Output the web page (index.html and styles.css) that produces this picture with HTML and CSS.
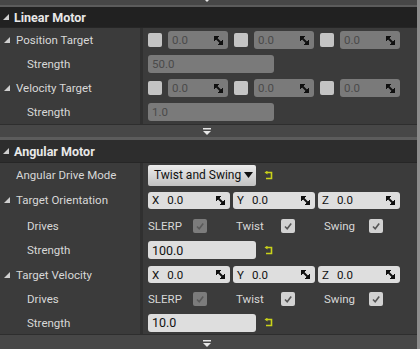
FILE: index.html
```html
<!DOCTYPE html>
<html lang="en">
<head>
  <meta charset="UTF-8" />
  <title>Details - Motor</title>
  <link rel="stylesheet" href="styles.css">
</head>
<body>
  <div class="panel">
    <div class="content">

      <!-- хвост предыдущей категории -->
      <div class="expander expander-top">
        <svg class="more" width="10" height="7" viewBox="0 0 10 7"><rect x="1" y="0" width="8" height="1.5" fill="#e6e6e6"/><polygon points="1,3 9,3 5,7" fill="#e6e6e6"/></svg>
      </div>
      <div class="cat-sep"></div>

      <!-- Linear Motor -->
      <div class="cat-header cat-dark">
        <svg class="tri" width="6" height="6" viewBox="0 0 6 6"><polygon points="0,6 6,6 6,0"/></svg>
        <span>Linear Motor</span>
      </div>

      <div class="row">
        <div class="name"><svg class="tri" width="6" height="6" viewBox="0 0 6 6"><polygon points="0,6 6,6 6,0"/></svg>Position Target</div>
        <div class="value">
          <div class="vec vec-off">
            <div class="pair"><span class="cb cb-off"></span><span class="field field-off">0.0<svg class="spin" width="9" height="9" viewBox="0 0 9 9"><polygon points="0,0 5,0 0,5"/><polygon points="9,9 4,9 9,4"/><line x1="1" y1="1" x2="8" y2="8" stroke-width="2"/></svg></span></div>
            <div class="pair"><span class="cb cb-off"></span><span class="field field-off">0.0<svg class="spin" width="9" height="9" viewBox="0 0 9 9"><polygon points="0,0 5,0 0,5"/><polygon points="9,9 4,9 9,4"/><line x1="1" y1="1" x2="8" y2="8" stroke-width="2"/></svg></span></div>
            <div class="pair"><span class="cb cb-off"></span><span class="field field-off">0.0<svg class="spin" width="9" height="9" viewBox="0 0 9 9"><polygon points="0,0 5,0 0,5"/><polygon points="9,9 4,9 9,4"/><line x1="1" y1="1" x2="8" y2="8" stroke-width="2"/></svg></span></div>
          </div>
        </div>
      </div>

      <div class="row">
        <div class="name sub">Strength</div>
        <div class="value"><span class="field field-off field-wide">50.0</span></div>
      </div>

      <div class="row">
        <div class="name"><svg class="tri" width="6" height="6" viewBox="0 0 6 6"><polygon points="0,6 6,6 6,0"/></svg>Velocity Target</div>
        <div class="value">
          <div class="vec vec-off">
            <div class="pair"><span class="cb cb-off"></span><span class="field field-off">0.0<svg class="spin" width="9" height="9" viewBox="0 0 9 9"><polygon points="0,0 5,0 0,5"/><polygon points="9,9 4,9 9,4"/><line x1="1" y1="1" x2="8" y2="8" stroke-width="2"/></svg></span></div>
            <div class="pair"><span class="cb cb-off"></span><span class="field field-off">0.0<svg class="spin" width="9" height="9" viewBox="0 0 9 9"><polygon points="0,0 5,0 0,5"/><polygon points="9,9 4,9 9,4"/><line x1="1" y1="1" x2="8" y2="8" stroke-width="2"/></svg></span></div>
            <div class="pair"><span class="cb cb-off"></span><span class="field field-off">0.0<svg class="spin" width="9" height="9" viewBox="0 0 9 9"><polygon points="0,0 5,0 0,5"/><polygon points="9,9 4,9 9,4"/><line x1="1" y1="1" x2="8" y2="8" stroke-width="2"/></svg></span></div>
          </div>
        </div>
      </div>

      <div class="row">
        <div class="name sub">Strength</div>
        <div class="value"><span class="field field-off field-wide">1.0</span></div>
      </div>

      <div class="expander">
        <svg class="more" width="10" height="7" viewBox="0 0 10 7"><rect x="1" y="0" width="8" height="1.5" fill="#e6e6e6"/><polygon points="1,3 9,3 5,7" fill="#e6e6e6"/></svg>
      </div>
      <div class="cat-sep"></div>

      <!-- Angular Motor -->
      <div class="cat-header">
        <svg class="tri" width="6" height="6" viewBox="0 0 6 6"><polygon points="0,6 6,6 6,0"/></svg>
        <span>Angular Motor</span>
      </div>

      <div class="row">
        <div class="name plain">Angular Drive Mode</div>
        <div class="value">
          <span class="combo">Twist and Swing <svg width="9" height="6" viewBox="0 0 9 6"><polygon points="0,0 9,0 4.5,6" fill="#111"/></svg></span>
          <svg class="reset" width="9" height="9" viewBox="0 0 9 9"><path d="M3 1.5 H7.5 V7.5 H2" fill="none" stroke="#c9d21a" stroke-width="1.6"/><polygon points="0.5,1.5 3.5,-0.5 3.5,3.5" fill="#c9d21a"/></svg>
        </div>
      </div>

      <div class="row row-vec">
        <div class="name"><svg class="tri" width="6" height="6" viewBox="0 0 6 6"><polygon points="0,6 6,6 6,0"/></svg>Target Orientation</div>
        <div class="value">
          <div class="vec">
            <span class="field"><b>X</b>0.0<svg class="spin" width="9" height="9" viewBox="0 0 9 9"><polygon points="0,0 5,0 0,5"/><polygon points="9,9 4,9 9,4"/><line x1="1" y1="1" x2="8" y2="8" stroke-width="2"/></svg></span>
            <span class="field"><b>Y</b>0.0<svg class="spin" width="9" height="9" viewBox="0 0 9 9"><polygon points="0,0 5,0 0,5"/><polygon points="9,9 4,9 9,4"/><line x1="1" y1="1" x2="8" y2="8" stroke-width="2"/></svg></span>
            <span class="field"><b>Z</b>0.0<svg class="spin" width="9" height="9" viewBox="0 0 9 9"><polygon points="0,0 5,0 0,5"/><polygon points="9,9 4,9 9,4"/><line x1="1" y1="1" x2="8" y2="8" stroke-width="2"/></svg></span>
          </div>
        </div>
      </div>

      <div class="row row-drives">
        <div class="name sub">Drives</div>
        <div class="value">
          <div class="drives">
            <div class="drive"><span>SLERP</span><span class="cb cb-off"><svg width="10" height="10" viewBox="0 0 10 10"><path d="M2 5.5 L4.2 7.7 L8.2 2.5" fill="none" stroke="#5a5a5a" stroke-width="1.6"/></svg></span></div>
            <div class="drive"><span>Twist</span><span class="cb"><svg width="10" height="10" viewBox="0 0 10 10"><path d="M2 5.5 L4.2 7.7 L8.2 2.5" fill="none" stroke="#555" stroke-width="1.6"/></svg></span></div>
            <div class="drive"><span>Swing</span><span class="cb"><svg width="10" height="10" viewBox="0 0 10 10"><path d="M2 5.5 L4.2 7.7 L8.2 2.5" fill="none" stroke="#555" stroke-width="1.6"/></svg></span></div>
          </div>
        </div>
      </div>

      <div class="row">
        <div class="name sub">Strength</div>
        <div class="value">
          <span class="field field-mid">100.0</span>
          <svg class="reset" width="9" height="9" viewBox="0 0 9 9"><path d="M3 1.5 H7.5 V7.5 H2" fill="none" stroke="#c9d21a" stroke-width="1.6"/><polygon points="0.5,1.5 3.5,-0.5 3.5,3.5" fill="#c9d21a"/></svg>
        </div>
      </div>

      <div class="row row-vec2">
        <div class="name"><svg class="tri" width="6" height="6" viewBox="0 0 6 6"><polygon points="0,6 6,6 6,0"/></svg>Target Velocity</div>
        <div class="value">
          <div class="vec">
            <span class="field"><b>X</b>0.0<svg class="spin" width="9" height="9" viewBox="0 0 9 9"><polygon points="0,0 5,0 0,5"/><polygon points="9,9 4,9 9,4"/><line x1="1" y1="1" x2="8" y2="8" stroke-width="2"/></svg></span>
            <span class="field"><b>Y</b>0.0<svg class="spin" width="9" height="9" viewBox="0 0 9 9"><polygon points="0,0 5,0 0,5"/><polygon points="9,9 4,9 9,4"/><line x1="1" y1="1" x2="8" y2="8" stroke-width="2"/></svg></span>
            <span class="field"><b>Z</b>0.0<svg class="spin" width="9" height="9" viewBox="0 0 9 9"><polygon points="0,0 5,0 0,5"/><polygon points="9,9 4,9 9,4"/><line x1="1" y1="1" x2="8" y2="8" stroke-width="2"/></svg></span>
          </div>
        </div>
      </div>

      <div class="row">
        <div class="name sub">Drives</div>
        <div class="value">
          <div class="drives">
            <div class="drive"><span>SLERP</span><span class="cb cb-off"><svg width="10" height="10" viewBox="0 0 10 10"><path d="M2 5.5 L4.2 7.7 L8.2 2.5" fill="none" stroke="#5a5a5a" stroke-width="1.6"/></svg></span></div>
            <div class="drive"><span>Twist</span><span class="cb"><svg width="10" height="10" viewBox="0 0 10 10"><path d="M2 5.5 L4.2 7.7 L8.2 2.5" fill="none" stroke="#555" stroke-width="1.6"/></svg></span></div>
            <div class="drive"><span>Swing</span><span class="cb"><svg width="10" height="10" viewBox="0 0 10 10"><path d="M2 5.5 L4.2 7.7 L8.2 2.5" fill="none" stroke="#555" stroke-width="1.6"/></svg></span></div>
          </div>
        </div>
      </div>

      <div class="row row-last">
        <div class="name sub">Strength</div>
        <div class="value">
          <span class="field field-mid">10.0</span>
          <svg class="reset" width="9" height="9" viewBox="0 0 9 9"><path d="M3 1.5 H7.5 V7.5 H2" fill="none" stroke="#c9d21a" stroke-width="1.6"/><polygon points="0.5,1.5 3.5,-0.5 3.5,3.5" fill="#c9d21a"/></svg>
        </div>
      </div>

      <div class="expander expander-bottom">
        <svg class="more" width="10" height="7" viewBox="0 0 10 7"><rect x="1" y="0" width="8" height="1.5" fill="#e6e6e6"/><polygon points="1,3 9,3 5,7" fill="#e6e6e6"/></svg>
      </div>
    </div>
    <div class="scrollbar"></div>
  </div>
</body>
</html>
```

FILE: styles.css
```css
body {
  margin: 0;
  background: #3b3b3b;
  font-family: Roboto, "Liberation Sans", sans-serif;
  font-size: 11.5px;
  color: #d8d8d8;
  overflow: hidden;
}

.panel {
  display: flex;
  height: 349px;
}

.content {
  flex: 1;
  display: flex;
  flex-direction: column;
  background: #3b3b3b;
}

.scrollbar {
  width: 3px;
  background: #8c8c8c;
}

/* Расширители категорий */
.expander {
  height: 12px;
  background: #474747;
  display: flex;
  justify-content: center;
  align-items: center;
  border-top: 1px solid #2e2e2e;
}

.expander-top {
  height: 5px;
  border-top: none;
  align-items: flex-end;
  overflow: hidden;
}

.expander-top .more {
  margin-bottom: 3px;
}

.expander-bottom {
  flex: 1;
  align-items: flex-start;
  padding-top: 5px;
}

.more {
  margin-left: -4px;
}

.cat-sep {
  height: 3px;
  background: #5c5c5c;
}

.expander-top + .cat-sep {
  height: 2px;
}

/* Заголовки категорий */
.cat-header {
  height: 22px;
  display: flex;
  align-items: center;
  gap: 5px;
  padding-left: 3px;
  background: #2d2d2d;
  border-bottom: 1px solid #262626;
  font-weight: bold;
  font-size: 12.5px;
  color: #e8e8e8;
}

.cat-dark {
  height: 20px;
  background: #212121;
}

.tri {
  fill: #cfcfcf;
  flex: none;
}

/* Строки */
.row {
  display: grid;
  grid-template-columns: 143px 1fr;
  height: 24px;
}

.row-vec {
  height: 26px;
}

.row-drives,
.row-vec2 {
  height: 25px;
}

.row-last {
  height: 23px;
}

.name {
  display: flex;
  align-items: center;
  gap: 6px;
  padding-left: 4px;
  border-right: 3px solid #303030;
  white-space: nowrap;
}

.name.sub {
  padding-left: 27px;
}

.name.plain {
  padding-left: 16px;
}

.value {
  display: flex;
  align-items: center;
  gap: 7px;
  padding-left: 5px;
}

/* Поля ввода */
.field {
  display: flex;
  align-items: center;
  height: 17px;
  padding-left: 4px;
  border-radius: 3px;
  background: #dedede;
  color: #111;
  box-sizing: border-box;
  font-size: 11.5px;
}

.field b {
  font-weight: normal;
  margin-right: 8px;
}

.field-off {
  background: #7a7a7a;
  color: #4a4a4a;
}

.field-wide {
  width: 126px;
  height: 18px;
}

.field-mid {
  width: 108px;
  height: 18px;
  font-size: 12.5px;
}

.spin {
  margin-left: auto;
  margin-right: 5px;
  fill: #111;
  stroke: #111;
}

.vec {
  display: grid;
  grid-template-columns: repeat(3, 82px);
  gap: 3px;
}

.vec-off {
  grid-template-columns: repeat(3, 80px);
  gap: 6px;
}

.pair {
  display: flex;
  align-items: center;
  gap: 6px;
}

.pair .field {
  flex: 1;
  height: 18px;
}

/* Чекбоксы */
.cb {
  width: 14px;
  height: 14px;
  border-radius: 2px;
  background: #d2d2d2;
  display: flex;
  align-items: center;
  justify-content: center;
  flex: none;
}

.cb-off {
  background: #c4c4c4;
}

.drive .cb-off {
  background: #7c7c7c;
}

.drives {
  display: grid;
  grid-template-columns: repeat(3, 88px);
}

.drive {
  display: flex;
  align-items: center;
}

.drive span:first-child {
  width: 45px;
}

/* Выпадающий список */
.combo {
  display: flex;
  align-items: center;
  gap: 3px;
  height: 21px;
  width: 108px;
  box-sizing: border-box;
  padding-left: 6px;
  border-radius: 2px;
  background: linear-gradient(#ececec, #c2c2c2);
  color: #111;
  font-size: 12px;
}

.reset {
  margin-left: 1px;
}
```
